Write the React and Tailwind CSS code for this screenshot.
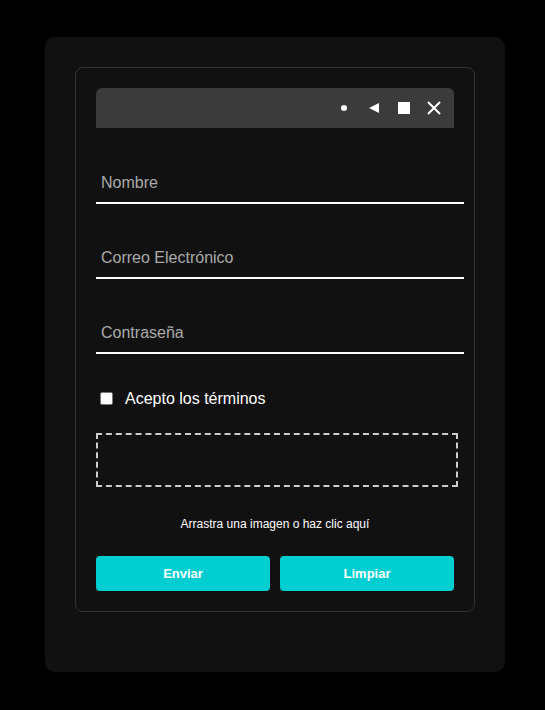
import React from 'react';

const font = { fontFamily: '"Liberation Sans", Arial, sans-serif' };

const TitleBar = () => (
  <div className="flex h-[40px] w-[358px] items-center justify-end rounded-t-[6px] bg-[#3b3b3b] pr-[5px]">
    <span className="flex h-[40px] w-[30px] items-center justify-center">
      <span className="block h-[6px] w-[6px] rounded-full bg-white" />
    </span>
    <span className="flex h-[40px] w-[30px] items-center justify-center">
      <svg width="10" height="10" viewBox="0 0 10 10">
        <polygon points="10,0 10,10 0,5" fill="#fff" />
      </svg>
    </span>
    <span className="flex h-[40px] w-[30px] items-center justify-center">
      <span className="block h-[12px] w-[12px] bg-white" />
    </span>
    <span className="flex h-[40px] w-[30px] items-center justify-center">
      <svg width="14" height="14" viewBox="0 0 14 14">
        <path d="M1 1 L13 13 M13 1 L1 13" stroke="#fff" strokeWidth="2" />
      </svg>
    </span>
  </div>
);

const Field = ({ placeholder, type, className }) => (
  <input
    type={type}
    placeholder={placeholder}
    className={`block h-[40px] w-[368px] border-0 border-b-2 border-white bg-transparent px-[5px] text-[16px] text-white outline-none placeholder:text-[#aaaaaa] ${className}`}
    style={font}
  />
);

export default function App() {
  return (
    <div className="min-h-screen bg-black pl-[45px] pt-[37px]" style={font}>
      <div className="h-[635px] w-[460px] rounded-[10px] bg-[#111111] p-[30px]">
        <div className="rounded-lg border border-[#333333] bg-[#111111] p-[20px]">
          <TitleBar />

          <Field placeholder="Nombre" type="text" className="mt-[36px]" />
          <Field placeholder="Correo Electrónico" type="email" className="mt-[35px]" />
          <Field placeholder="Contraseña" type="password" className="mt-[35px]" />

          <label className="mt-[38px] flex h-[13px] items-center gap-[12px] pl-[4px] text-[16px] text-white">
            <span className="block h-[13px] w-[13px] rounded-[2px] border border-[#767676] bg-white" />
            <span>Acepto los términos</span>
          </label>

          <div className="mt-[28px] h-[54px] w-[362px] border-2 border-dashed border-[#cccccc]" />

          <p className="mt-[30px] text-center text-[12px] leading-[14px] text-white">
            Arrastra una imagen o haz clic aquí
          </p>

          <div className="mt-[25px] flex w-[358px] gap-[10px]">
            <button className="h-[35px] flex-1 rounded-[4px] bg-[#00ced1] text-[13px] font-bold text-white">
              Enviar
            </button>
            <button className="h-[35px] flex-1 rounded-[4px] bg-[#00ced1] text-[13px] font-bold text-white">
              Limpiar
            </button>
          </div>
        </div>
      </div>
    </div>
  );
}
